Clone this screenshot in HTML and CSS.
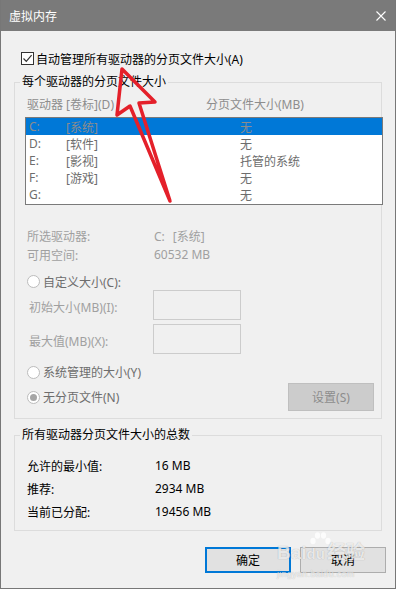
FILE: index.html
```html
<!DOCTYPE html>
<html lang="zh-CN">
<head>
  <meta charset="UTF-8" />
  <meta name="viewport" content="width=device-width, initial-scale=1.0" />
  <title>虚拟内存</title>
  <link rel="stylesheet" href="styles.css">
</head>
<body>
  <div class="window">
    <div class="titlebar">
      <span class="title">虚拟内存</span>
      <svg class="close" width="10" height="10" viewBox="0 0 10 10">
        <path d="M0.5 0.5 L9.5 9.5 M9.5 0.5 L0.5 9.5" stroke="#fff" stroke-width="1.1" fill="none"/>
      </svg>
    </div>

    <div class="content">
      <label class="auto">
        <span class="checkbox">
          <svg width="11" height="11" viewBox="0 0 11 11"><path d="M1.5 5.5 L4.3 8.4 L9.6 2.2" stroke="#333" stroke-width="1.2" fill="none"/></svg>
        </span>
        自动管理所有驱动器的分页文件大小(A)
      </label>

      <fieldset class="group drives">
        <legend>每个驱动器的分页文件大小</legend>
        <div class="list-head"><span class="col1">驱动器 [卷标](D)</span><span>分页文件大小(MB)</span></div>
        <div class="listbox">
          <div class="item selected"><span class="drive">C:</span><span class="vol">[系统]</span><span>无</span></div>
          <div class="item"><span class="drive">D:</span><span class="vol">[软件]</span><span>无</span></div>
          <div class="item"><span class="drive">E:</span><span class="vol">[影视]</span><span>托管的系统</span></div>
          <div class="item"><span class="drive">F:</span><span class="vol">[游戏]</span><span>无</span></div>
          <div class="item"><span class="drive">G:</span><span class="vol"></span><span>无</span></div>
        </div>

        <div class="info first"><span class="k">所选驱动器:</span><span>C:<span class="gap"></span>[系统]</span></div>
        <div class="info"><span class="k">可用空间:</span><span>60532 MB</span></div>

        <div class="radio-row custom"><span class="radio"></span>自定义大小(C):</div>
        <div class="size-row"><span class="k">初始大小(MB)(I):</span><span class="edit"></span></div>
        <div class="size-row second"><span class="k">最大值(MB)(X):</span><span class="edit"></span></div>
        <div class="radio-row managed"><span class="radio"></span>系统管理的大小(Y)</div>
        <div class="radio-row none"><span class="radio checked"></span>无分页文件(N)<button class="set" disabled>设置(S)</button></div>
      </fieldset>

      <fieldset class="group totals">
        <legend>所有驱动器分页文件大小的总数</legend>
        <div class="total-row first"><span class="k">允许的最小值:</span><span>16 MB</span></div>
        <div class="total-row"><span class="k">推荐:</span><span>2934 MB</span></div>
        <div class="total-row"><span class="k">当前已分配:</span><span>19456 MB</span></div>
      </fieldset>

      <div class="actions">
        <button class="btn primary">确定</button>
        <button class="btn">取消</button>
      </div>
    </div>

    <!-- 红色箭头标注 -->
    <svg class="arrow" width="80" height="150" viewBox="105 60 80 150">
      <polygon points="122,69 155,102 139,103 170,201 130,106 117,115"
        fill="none" stroke="#e4202a" stroke-width="3.5" stroke-linejoin="round"/>
    </svg>

    <!-- 水印 -->
    <div class="watermark">
      <svg class="paw" width="24" height="22" viewBox="0 0 24 22">
        <ellipse cx="5" cy="9" rx="2.6" ry="3.2"/>
        <ellipse cx="9.5" cy="3.5" rx="2.6" ry="3.2"/>
        <ellipse cx="15.5" cy="3.5" rx="2.6" ry="3.2"/>
        <ellipse cx="20" cy="9" rx="2.6" ry="3.2"/>
      </svg>
      <div class="wm-brand">Bai<span class="du">du</span>经验</div>
      <div class="wm-url">jingyan.baidu.com</div>
    </div>
  </div>
</body>
</html>
```

FILE: styles.css
```css
/* 对话框基础 */
* { box-sizing: border-box; }
body {
  margin: 0;
  background: #f0f0f0;
  font-family: "Noto Sans", "Noto Sans CJK SC", sans-serif;
  font-size: 12px;
  color: #000;
}
.window {
  position: relative;
  width: 396px; height: 589px;
  border: 1px solid #777; border-top: 0;
  background: #f0f0f0;
  overflow: hidden;
}
.titlebar {
  height: 31px; background: #7a7a7a; color: #fff;
  display: flex; align-items: center; justify-content: space-between;
  padding: 0 9px 0 8px;
}
.content { padding-left: 13px; }

/* 自动管理复选框 */
.auto { display: flex; align-items: center; height: 17px; margin: 19px 0 0 7px; }
.checkbox {
  width: 13px; height: 13px; border: 1px solid #333; background: #fff;
  display: flex; align-items: center; justify-content: center; margin-right: 2px;
}

/* 分组框 */
.group {
  width: 368px; min-width: 0; margin: 0; padding: 0 0 7px 0;
  border: 1px solid #dcdcdc;
}
.group legend { margin-left: 5px; padding: 0 2px; height: 16px; line-height: 16px; }
.drives { margin-top: 7px; }
.totals { margin-top: 8px; }

.list-head { display: flex; align-items: center; height: 16px; margin-top: 6px; padding-left: 12px; color: #8d8d8d; }
.list-head .col1 { width: 179px; }
.listbox {
  width: 358px; height: 88px; margin: 5px 0 0 10px;
  border: 1px solid #7a7a7a; background: #fff;
}
.item { display: flex; align-items: center; height: 17px; padding-left: 3px; color: #6d6d6d; }
.item .drive { width: 37px; }
.item .vol { width: 174px; }
.item.selected { background: #0078d7; color: #8c8c8c; }

.info { display: flex; align-items: center; height: 19px; padding-left: 12px; color: #a0a0a0; }
.info.first { margin-top: 21px; }
.info .k { width: 127px; }
.gap { display: inline-block; width: 8px; }

.radio-row { display: flex; align-items: center; padding-left: 12px; color: #6d6d6d; }
.radio {
  width: 13px; height: 13px; border-radius: 50%;
  border: 1px solid #bcbcbc; background: #fff; margin-right: 3px;
  display: flex; align-items: center; justify-content: center;
}
.radio.checked::after { content: ""; width: 7px; height: 7px; border-radius: 50%; background: #a6a6a6; }
.custom { height: 17px; margin-top: 9px; }
.managed { height: 18px; margin-top: 9px; }
.none { height: 28px; margin-top: 2px; }

.size-row { display: flex; align-items: center; height: 30px; padding-left: 14px; color: #a0a0a0; }
.size-row .k { width: 124px; padding-top: 3px; }
.size-row.second { margin-top: 4px; }
.edit { width: 88px; height: 30px; border: 1px solid #ccc; background: #f0f0f0; }

.set {
  margin: 0 7px 0 auto; width: 86px; height: 28px;
  border: 1px solid #bfbfbf; background: #cccccc; color: #8d8d8d;
  font: inherit; padding: 0;
}

.total-row { display: flex; align-items: center; height: 23px; padding-left: 12px; }
.total-row.first { margin-top: 11px; }
.total-row .k { width: 128px; }

/* 底部按钮 */
.actions { display: flex; justify-content: flex-end; gap: 9px; margin-top: 16px; padding-right: 9px; }
.btn {
  width: 86px; height: 26px; padding: 0;
  border: 1px solid #adadad; background: #e1e1e1;
  font: inherit; color: #000;
}
.btn.primary { border: 2px solid #0078d7; }

/* 标注与水印 */
.arrow { position: absolute; left: 104px; top: 60px; pointer-events: none; }
.watermark {
  position: absolute; left: 276px; top: 532px; width: 96px;
  color: rgba(255,255,255,0.75);
  text-shadow: 0 0 1px rgba(0,0,0,0.3);
  pointer-events: none;
}
.paw { display: block; margin-left: 31px; fill: rgba(255,255,255,0.8); }
.wm-brand { font-family: "Liberation Sans", "Noto Sans CJK SC", sans-serif; font-size: 19px; font-weight: bold; line-height: 18px; margin-top: -10px; }
.wm-brand .du { font-size: 15px; margin-right: 2px; }
.wm-url { font-family: "Liberation Sans", sans-serif; font-size: 9px; line-height: 12px; margin-top: 5px; letter-spacing: 0.3px; }
```
